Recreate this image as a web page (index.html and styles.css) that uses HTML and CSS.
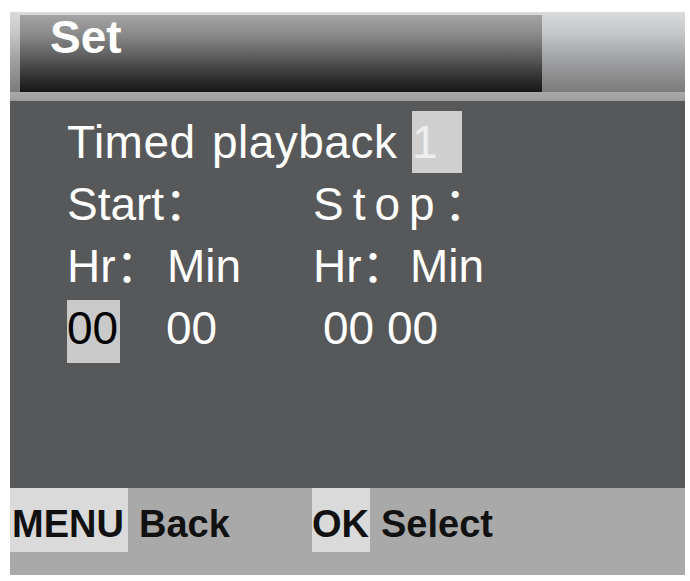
FILE: index.html
```html
<!DOCTYPE html>
<html>
<head>
<meta charset="utf-8">
<link rel="stylesheet" href="styles.css">
</head>
<body>
<div class="screen">
  <div class="header">
    <div class="title-box">Set</div>
  </div>
  <div class="strip"></div>
  <div class="content">
    <div class="row">
      <span class="cell timed">Timed playback</span>
      <span class="cell num-sel">1</span>
    </div>
    <div class="row">
      <span class="cell start">Start：</span>
      <span class="cell stop">Stop：</span>
    </div>
    <div class="row">
      <span class="cell hr1">Hr：</span>
      <span class="cell min1">Min</span>
      <span class="cell hr2">Hr：</span>
      <span class="cell">Min</span>
    </div>
    <div class="row">
      <span class="cell hh-sel">00</span>
      <span class="cell mm1">00</span>
      <span class="cell">00 00</span>
    </div>
  </div>
  <div class="footer">
    <div class="group first">
      <span class="key menu">MENU</span>
      <span class="label">Back</span>
    </div>
    <div class="group">
      <span class="key ok">OK</span>
      <span class="label">Select</span>
    </div>
  </div>
</div>
</body>
</html>
```

FILE: styles.css
```css
html, body {
  margin: 0;
  padding: 0;
  background: #ffffff;
}

.screen {
  margin: 12px 0 0 10px;
  width: 675px;
  height: 563px;
  display: flex;
  flex-direction: column;
  font-family: "Liberation Sans", "Noto Sans CJK SC", sans-serif;
}

.header {
  height: 80px;
  padding: 3px 0 0 10px;
  box-sizing: border-box;
  background: linear-gradient(to bottom, #d8dadb 0%, #c6c8ca 25%, #9fa0a2 60%, #7b7b7c 100%);
}

.title-box {
  width: 522px;
  height: 77px;
  box-sizing: border-box;
  padding-left: 30px;
  background: linear-gradient(to bottom, #a4a4a4 0%, #8a8a8a 25%, #5c5c5c 55%, #333333 80%, #161616 100%);
  color: #ffffff;
  font-weight: bold;
  font-size: 46px;
  line-height: 44px;
}

.strip {
  height: 9px;
  background: linear-gradient(to bottom, #a9a9a9, #9d9d9d);
}

.content {
  flex: 1;
  background: #575859;
  padding: 10px 0 0 57px;
  color: #ffffff;
  font-size: 46px;
}

.row {
  display: flex;
  align-items: flex-start;
  height: 62px;
  line-height: 62px;
  white-space: nowrap;
}

.cell {
  display: block;
}

.timed {
  width: 345px;
  letter-spacing: 0.5px;
  word-spacing: 3px;
}

.num-sel {
  width: 50px;
  height: 62px;
  background: #cfcfcf;
  color: #eeeeee;
}

.start {
  width: 246px;
}

.stop {
  letter-spacing: 9px;
}

.hr1 {
  width: 100px;
}

.min1 {
  width: 146px;
}

.hr2 {
  width: 97px;
}

.hh-sel {
  width: 53px;
  height: 63px;
  margin-top: 3px;
  line-height: 56px;
  background: #c9c9c9;
  color: #000000;
}

.mm1 {
  margin-left: 46px;
  width: 157px;
}

.footer {
  height: 87px;
  background: #a9a9a9;
  display: flex;
  align-items: flex-start;
  font-weight: bold;
  font-size: 38px;
  color: #111111;
}

.group {
  display: flex;
  align-items: flex-start;
}

.group.first {
  width: 302px;
}

.key {
  height: 64px;
  box-sizing: border-box;
  padding-top: 8px;
  line-height: 56px;
  background: #dadada;
}

.menu {
  width: 118px;
  padding-left: 2px;
}

.ok {
  width: 58px;
}

.label {
  padding-top: 8px;
  line-height: 56px;
  margin-left: 11px;
}
```
